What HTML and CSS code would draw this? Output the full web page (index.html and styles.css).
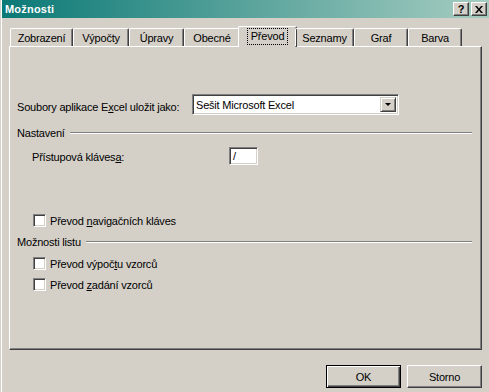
FILE: index.html
```html
<!DOCTYPE html>
<html lang="cs">
<head>
    <meta charset="UTF-8">
    <title>Možnosti</title>
    <link rel="stylesheet" href="styles.css">
</head>
<body>
    <div class="window">
        <div class="titlebar">
            <span class="title">Možnosti</span>
            <div class="caption-buttons">
                <span class="cap-btn">?</span>
                <span class="cap-btn">
                    <svg width="8" height="7" viewBox="0 0 8 7"><path d="M0 0h2l2 2.5L6 0h2L5 3.5 8 7H6L4 4.5 2 7H0l3-3.5z" fill="#000"/></svg>
                </span>
            </div>
        </div>

        <!-- Tab strip -->
        <div class="tabs">
            <div class="tab">Zobrazení</div>
            <div class="tab">Výpočty</div>
            <div class="tab">Úpravy</div>
            <div class="tab">Obecné</div>
            <div class="tab active"><span class="focus">Převod</span></div>
            <div class="tab">Seznamy</div>
            <div class="tab">Graf</div>
            <div class="tab">Barva</div>
        </div>

        <div class="panel">
            <div class="row row-save">
                <span class="save-label">Soubory aplikace E<u>x</u>cel uložit jako:</span>
                <div class="select">
                    <span class="select-text">Sešit Microsoft Excel</span>
                    <span class="drop-btn"><span class="arrow"></span></span>
                </div>
            </div>

            <div class="group-title group-settings"><span>Nastavení</span></div>

            <div class="row row-key">
                <span class="key-label">Přístupová kláves<u>a</u>:</span>
                <div class="text-box">/</div>
            </div>

            <div class="row check-row check-nav">
                <span class="checkbox"></span>
                <span>Převod <u>n</u>avigačních kláves</span>
            </div>

            <div class="group-title group-sheet"><span>Možnosti listu</span></div>

            <div class="row check-row check-first">
                <span class="checkbox"></span>
                <span>Převod výpoč<u>t</u>u vzorců</span>
            </div>
            <div class="row check-row">
                <span class="checkbox"></span>
                <span>Převod <u>z</u>adání vzorců</span>
            </div>
        </div>

        <div class="footer">
            <button class="btn btn-default">OK</button>
            <button class="btn">Storno</button>
        </div>
    </div>
</body>
</html>
```

FILE: styles.css
```css
body {
    margin: 0;
    font-family: "Liberation Sans", Arial, sans-serif;
    font-size: 11px;
    letter-spacing: -0.2px;
    color: #000;
    background-color: #d4d0c8;
}
.window {
    width: 489px;
    height: 392px;
    background-color: #d4d0c8;
    box-shadow: inset 1px 0 #d4d0c8, inset 2px 0 #ffffff; /* outer frame edge */
    overflow: hidden;
}
u {
    text-decoration: underline;
    text-underline-offset: 1px;
}

/* Title bar */
.titlebar {
    height: 18px;
    margin-left: 2px;
    padding: 0 2px 0 3px;
    display: flex;
    align-items: center;
    justify-content: space-between;
    background: linear-gradient(to right, #0b7976, #a6cdc1);
}
.title {
    color: #ffffff;
    font-weight: bold;
    font-size: 11px;
    letter-spacing: 0.2px;
}
.caption-buttons {
    display: flex;
    gap: 2px;
}
.cap-btn {
    width: 16px;
    height: 14px;
    box-sizing: border-box;
    display: flex;
    align-items: center;
    justify-content: center;
    background-color: #d4d0c8;
    border-top: 1px solid #ffffff;
    border-left: 1px solid #ffffff;
    border-right: 1px solid #404040;
    border-bottom: 1px solid #404040;
    box-shadow: inset -1px -1px #808080;
    font-weight: bold;
    font-size: 11px;
}

/* Tabs */
.tabs {
    margin: 8px 0 0 10px;
    height: 20px;
    display: grid;
    grid-template-columns: 63px 56px 55px 56px 55px 59px 54px 54px;
    align-items: end;
    position: relative;
    z-index: 1;
}
.tab {
    height: 18px;
    box-sizing: border-box;
    display: flex;
    align-items: center;
    justify-content: center;
    padding-top: 1px;
    white-space: nowrap;
    border-top: 1px solid #ffffff;
    border-left: 1px solid #ffffff;
    border-right: 1px solid #404040;
    border-radius: 2px 2px 0 0;
    box-shadow: inset -1px 0 #808080;
}
.tab.active {
    height: 21px;
    margin: 0 -2px -1px -2px;
    padding-top: 0;
    padding-bottom: 2px;
    background-color: #d4d0c8;
}
.focus {
    outline: 1px dotted #000;
    outline-offset: 0;
    padding: 1px 3px 2px 3px;
}

/* Main panel */
.panel {
    margin-left: 9px;
    width: 473px;
    height: 304px;
    box-sizing: border-box;
    padding: 0 9px 0 7px;
    border: 1px solid;
    border-color: #ffffff #404040 #404040 #ffffff;
    box-shadow: inset -1px -1px #808080;
}
.row {
    display: flex;
    align-items: center;
    white-space: nowrap;
}
.row-save {
    margin-top: 47px;
    height: 21px;
}
.save-label {
    width: 175px;
    flex-shrink: 0;
    padding-top: 4px;
}
.select {
    width: 207px;
    height: 21px;
    flex-shrink: 0;
    box-sizing: border-box;
    display: flex;
    align-items: center;
    justify-content: space-between;
    background-color: #ffffff;
    border: 1px solid;
    border-color: #808080 #ffffff #ffffff #808080;
    box-shadow: inset 1px 1px #404040, inset -1px -1px #d4d0c8;
    padding: 2px 2px 2px 3px;
}
.drop-btn {
    width: 16px;
    height: 15px;
    box-sizing: border-box;
    display: flex;
    align-items: center;
    justify-content: center;
    background-color: #d4d0c8;
    border: 1px solid;
    border-color: #d4d0c8 #404040 #404040 #d4d0c8;
    box-shadow: inset 1px 1px #ffffff, inset -1px -1px #808080;
}
.arrow {
    width: 0;
    height: 0;
    border-left: 3px solid transparent;
    border-right: 3px solid transparent;
    border-top: 3px solid #000;
}

/* Group headings with etched line */
.group-title {
    height: 14px;
    display: flex;
    align-items: center;
    gap: 5px;
    white-space: nowrap;
}
.group-title::after {
    content: "";
    flex: 1;
    border-top: 1px solid #808080;
    border-bottom: 1px solid #ffffff;
}
.group-settings {
    margin-top: 11px;
}
.group-sheet {
    margin-top: 4px;
}

.row-key {
    margin-top: 7px;
    height: 18px;
    padding-left: 15px;
}
.key-label {
    width: 197px;
    flex-shrink: 0;
    padding-top: 2px;
}
.text-box {
    width: 29px;
    height: 18px;
    flex-shrink: 0;
    box-sizing: border-box;
    padding: 2px 3px;
    background-color: #ffffff;
    border: 1px solid;
    border-color: #808080 #ffffff #ffffff #808080;
    box-shadow: inset 1px 1px #404040, inset -1px -1px #d4d0c8;
}

.check-row {
    height: 21px;
    padding-left: 16px;
    gap: 4px;
}
.check-nav {
    margin-top: 45px;
}
.check-first {
    margin-top: 4px;
}
.checkbox {
    width: 13px;
    height: 13px;
    flex-shrink: 0;
    box-sizing: border-box;
    background-color: #ffffff;
    border: 1px solid;
    border-color: #808080 #ffffff #ffffff #808080;
    box-shadow: inset 1px 1px #404040, inset -1px -1px #d4d0c8;
}

/* Dialog buttons */
.footer {
    margin-top: 15px;
    padding-right: 7px;
    display: flex;
    justify-content: flex-end;
    gap: 6px;
}
.btn {
    width: 75px;
    height: 23px;
    box-sizing: border-box;
    font-family: "Liberation Sans", Arial, sans-serif;
    font-size: 11px;
    letter-spacing: -0.2px;
    color: #000;
    background-color: #d4d0c8;
    border: 1px solid;
    border-color: #ffffff #404040 #404040 #ffffff;
    box-shadow: inset -1px -1px #808080;
    padding: 0;
}
.btn-default {
    border: 1px solid #000;
    box-shadow: inset 1px 1px #ffffff, inset -1px -1px #404040, inset -2px -2px #808080;
}
```
